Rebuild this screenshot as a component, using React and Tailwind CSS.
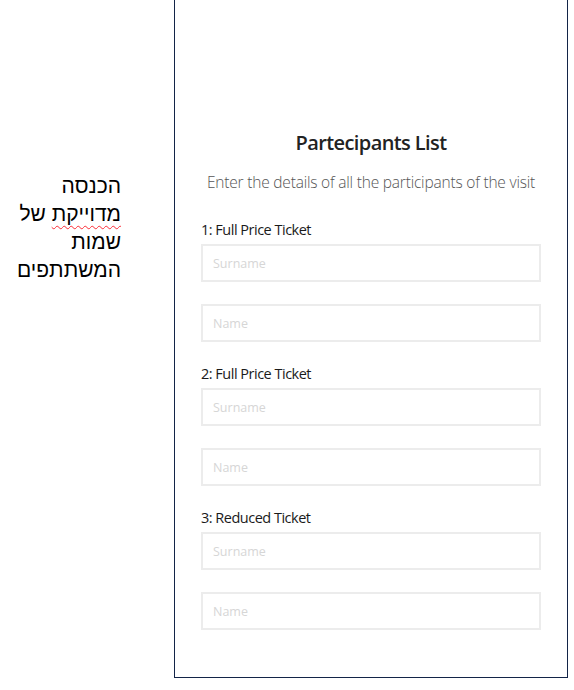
import React from 'react';

const sections = [
    { label: '1: Full Price Ticket' },
    { label: '2: Full Price Ticket' },
    { label: '3: Reduced Ticket' },
];

const Field = ({ placeholder }) => (
    <input
        type="text"
        placeholder={placeholder}
        className="w-full h-[38px] px-[10px] border-2 border-[#ececec] bg-white text-[12.5px] text-[#333] placeholder:text-[#d6d6d6] outline-none"
    />
);

const App = () => {
    return (
        <div className="w-[574px] h-[690px] bg-white flex font-['Open_Sans',sans-serif]">
            {/* הערה בצד */}
            <div className="w-[174px] shrink-0 pt-[172px] pr-[53px]">
                <p
                    dir="rtl"
                    className="text-right text-[21px] leading-[28px] text-black font-['Liberation_Sans',Arial,sans-serif]"
                >
                    הכנסה
                    <br />
                    <span className="underline decoration-wavy decoration-red-500 decoration-1 underline-offset-[4px]">מדוייקת</span> של
                    <br />
                    שמות
                    <br />
                    המשתתפים
                </p>
            </div>

            <div className="w-[394px] h-[678px] border-x border-b border-[#132448] px-[26px] pt-[128px]">
                <h2 className="text-center text-[20px] leading-[30px] font-semibold text-[#222] tracking-[-0.6px]">Partecipants List</h2>
                <p className="mt-[14px] text-center text-[15.5px] leading-[20px] font-light text-[#555] tracking-[-0.2px]">
                    Enter the details of all the participants of the visit
                </p>

                <div className="mt-[28px] space-y-[22px]">
                    {sections.map((s) => (
                        <div key={s.label}>
                            <div className="text-[14.5px] leading-[20px] text-[#1a1a1a] tracking-[-0.5px]">{s.label}</div>
                            <div className="mt-[4px] space-y-[22px]">
                                <Field placeholder="Surname" />
                                <Field placeholder="Name" />
                            </div>
                        </div>
                    ))}
                </div>
            </div>
        </div>
    );
};

export default App;
